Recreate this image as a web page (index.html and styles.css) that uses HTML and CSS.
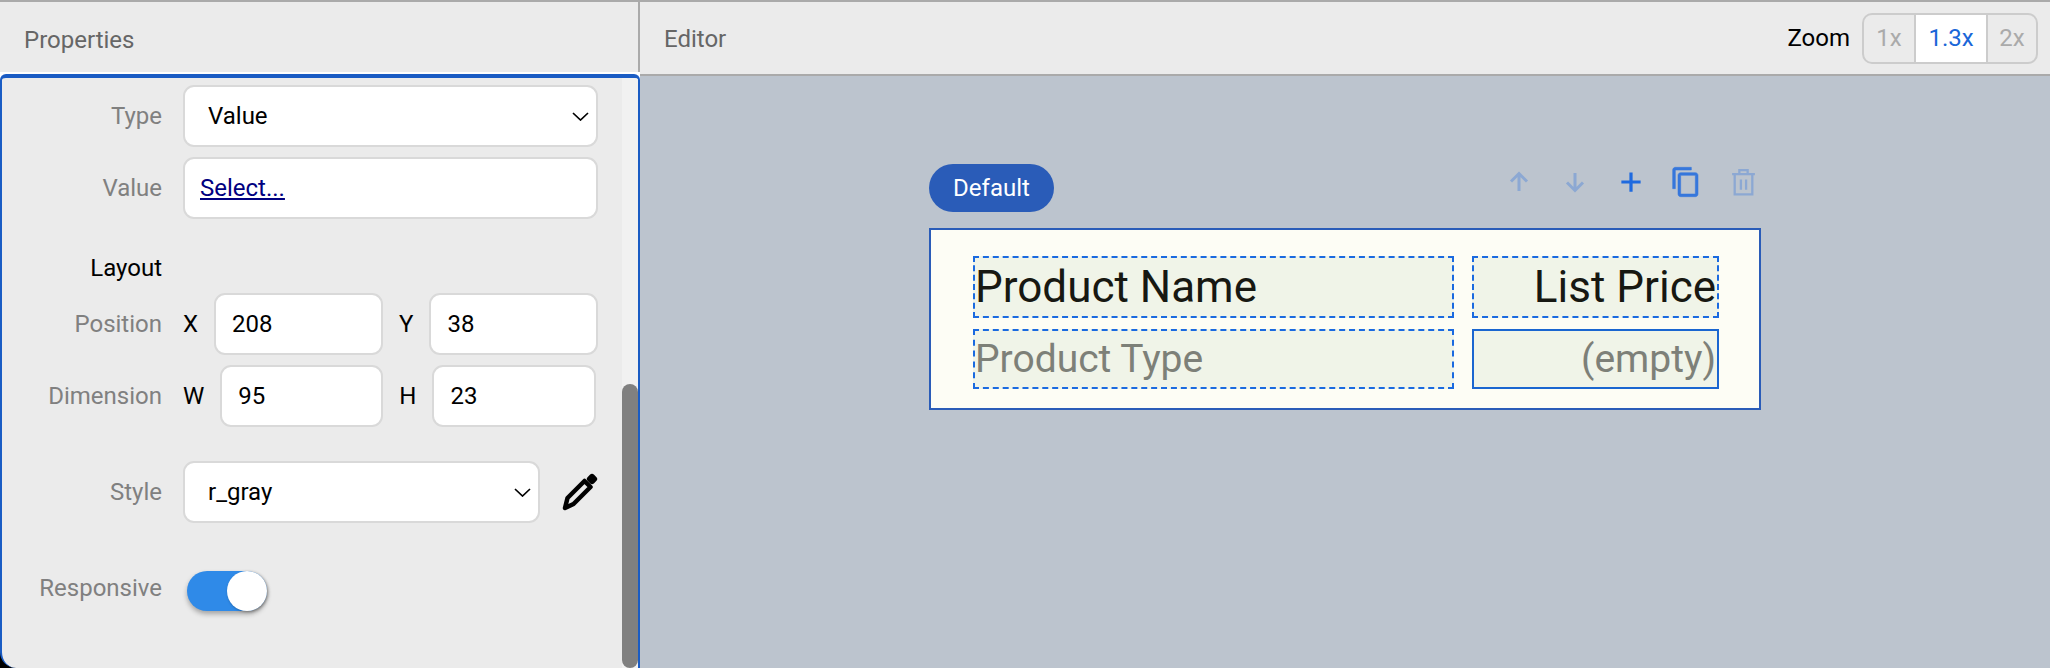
FILE: index.html
```html
<!DOCTYPE html>
<html lang="en">
<head>
<meta charset="utf-8">
<title>Properties and Editor</title>
<link rel="stylesheet" href="styles.css">
</head>
<body>
<div class="app">
  <aside class="left">
    <header class="left-head">Properties</header>
    <div class="panel-wrap">
      <div class="panel">
        <div class="form">
          <div class="row">
            <span class="label">Type</span>
            <div class="field select wide"><span>Value</span>
              <svg class="chev" viewBox="0 0 17 9"><path d="M1 1l7.5 7L16 1"/></svg></div>
          </div>
          <div class="row">
            <span class="label">Value</span>
            <div class="field wide link-field"><a class="link" href="#">Select...</a></div>
          </div>
          <div class="row row-heading"><span class="label heading">Layout</span></div>
          <div class="row row-pair">
            <span class="label">Position</span>
            <span class="letter">X</span><div class="field num w-x">208</div>
            <span class="letter letter-second">Y</span><div class="field num w-y">38</div>
          </div>
          <div class="row row-pair">
            <span class="label">Dimension</span>
            <span class="letter">W</span><div class="field num w-w">95</div>
            <span class="letter letter-second">H</span><div class="field num w-h">23</div>
          </div>
          <div class="row row-style">
            <span class="label">Style</span>
            <div class="field select style-select"><span>r_gray</span>
              <svg class="chev" viewBox="0 0 17 9"><path d="M1 1l7.5 7L16 1"/></svg></div>
            <svg class="pencil" viewBox="0 0 36 38"><path class="pencil-body" d="M3 35l2.500-10 17-17 6 6-17 17z"/><rect class="pencil-cap" x="25.500" y="1.500" width="9" height="9" rx="3" transform="rotate(45 30 6)"/></svg>
          </div>
          <div class="row row-toggle">
            <span class="label">Responsive</span>
            <div class="toggle"><span class="knob"></span></div>
          </div>
        </div>
        <div class="track"><div class="thumb"></div></div>
      </div>
    </div>
  </aside>
  <main class="right">
    <header class="right-head">
      <span class="editor-title">Editor</span>
      <span class="zoom-label">Zoom</span>
      <div class="zoom-group">
        <span class="seg seg-1">1x</span>
        <span class="seg seg-active">1.3x</span>
        <span class="seg seg-3">2x</span>
      </div>
    </header>
    <section class="stage">
      <div class="toolbar">
        <span class="pill">Default</span>
        <div class="tools">
          <svg class="tool faded" viewBox="0 0 24 24"><path d="M12 21V4M4 11.5L12 3.500l8 8"/></svg>
          <svg class="tool faded" viewBox="0 0 24 24"><path d="M12 3v17M4 12.500l8 8 8-8"/></svg>
          <svg class="tool plus" viewBox="0 0 24 24"><path d="M12 1.500v21M1.500 12h21"/></svg>
          <svg class="tool copy" viewBox="0 0 24 24"><path d="M16 1H4c-1.100 0-2 .9-2 2v14h2V3h12V1zm3 4H8c-1.100 0-2 .9-2 2v14c0 1.100.9 2 2 2h11c1.100 0 2-.9 2-2V7c0-1.100-.9-2-2-2zm0 16H8V7h11v14z"/></svg>
          <svg class="tool trash" viewBox="0 0 24 28"><path d="M1 6h22M8 5V2h8v3M3.500 6v19.500h17V6M9.500 11v10M14.500 11v10"/></svg>
        </div>
      </div>
      <div class="canvas">
        <div class="cell dashed title">Product Name</div>
        <div class="cell dashed title end">List Price</div>
        <div class="cell dashed sub">Product Type</div>
        <div class="cell solid sub end">(empty)</div>
      </div>
    </section>
  </main>
</div>
</body>
</html>
```
FILE: styles.css
```css
* { box-sizing: border-box; }
html, body { margin: 0; height: 100%; }
body { font-family: Roboto, "Liberation Sans", sans-serif; font-size: 24px; background: #fff; overflow: hidden; }

.app { display: flex; width: 2050px; height: 668px; }

.left { width: 640px; display: flex; flex-direction: column; background: #fff; }
.left-head {
  height: 72px;
  background: #ebebeb;
  border-top: 2px solid #aaa;
  border-right: 2px solid #aaa;
  padding: 6px 0 0 24px;
  display: flex;
  align-items: center;
  color: #666;
}
.panel-wrap {
  margin-top: 2px;
  flex: 1;
  min-height: 0;
  display: flex;
  background: linear-gradient(#fff 50%, #000 50%);
}
.panel {
  flex: 1;
  display: flex;
  background: #ebebeb;
  border: 2px solid #1a5cc4;
  border-top-width: 4px;
  border-bottom: 0;
  border-radius: 6px 6px 0 16px;
  overflow: hidden;
}
.form { flex: 1; padding-top: 7px; }
.track { width: 16px; background: #f1f1f1; padding-top: 306px; display: flex; }
.thumb { flex: 1; background: #808080; border-radius: 8px; }

.row { display: flex; align-items: center; height: 62px; margin-bottom: 10px; }
.label { width: 160px; text-align: right; color: #808080; flex: none; }
.heading { color: #000; }
.row-heading { height: 28px; margin: 35px 0 11px; }
.row-style { margin: 34px 0 0; }
.row-toggle { height: 40px; margin-top: 48px; align-items: flex-start; }
.row-toggle .label { line-height: 34px; }

.field {
  height: 62px;
  background: #fff;
  border: 2px solid #d9d9d9;
  border-radius: 11px;
  display: flex;
  align-items: center;
  color: #000;
  flex: none;
}
.wide { width: 415px; margin-left: 21px; }
.select { justify-content: space-between; padding: 0 7px 0 23px; }
.link-field { padding-left: 15px; }
.link { color: #000080; text-decoration: underline; }
.chev { width: 17px; height: 9px; fill: none; stroke: #000; stroke-width: 1.700; }
.style-select { width: 357px; margin-left: 21px; }
.pencil { width: 36px; height: 38px; margin-left: 22px; flex: none; }
.pencil-body { fill: none; stroke: #000; stroke-width: 4.500; stroke-linejoin: round; }
.pencil-cap { fill: #000; }

.letter { margin-left: 21px; margin-right: 16px; color: #000; flex: none; }
.letter-second { margin-left: 16px; margin-right: 16px; }
.num { padding-left: 16px; }
.w-x { width: 169px; }
.w-y { width: 169px; }
.w-w { width: 163px; }
.w-h { width: 164px; }

.toggle {
  width: 80px;
  height: 40px;
  margin-left: 25px;
  background: #2f8ae8;
  border-radius: 20px;
  display: flex;
  justify-content: flex-end;
  box-shadow: 0 3px 5px rgba(0, 0, 0, .3);
}
.knob { width: 40px; height: 40px; border-radius: 50%; background: #fff; box-shadow: 1px 1px 3px rgba(0, 0, 0, .35); }

.right { flex: 1; display: flex; flex-direction: column; background: #bcc4ce; }
.right-head {
  height: 76px;
  background: #ebebeb;
  border-top: 2px solid #aaa;
  border-bottom: 2px solid #aaa;
  padding: 0 12px 0 24px;
  display: flex;
  align-items: center;
  color: #000;
}
.editor-title { color: #666; margin-right: auto; padding-top: 2px; }
.zoom-label { margin-right: 12px; }
.zoom-group {
  display: flex;
  width: 176px;
  height: 51px;
  border: 2px solid #ccc;
  border-radius: 10px;
  overflow: hidden;
}
.seg { display: flex; align-items: center; justify-content: center; color: #aaa; }
.seg-1 { width: 50px; }
.seg-3 { flex: 1; }
.seg-active { width: 74px; background: #fff; color: #1a66d8; border-left: 2px solid #ccc; border-right: 2px solid #ccc; }

.stage { flex: 1; padding: 88px 0 0 289px; }
.toolbar { width: 832px; height: 48px; margin-bottom: 16px; display: flex; justify-content: space-between; align-items: center; }
.pill {
  width: 125px;
  height: 48px;
  border-radius: 24px;
  background: #2a5cb8;
  color: #fff;
  display: flex;
  align-items: center;
  justify-content: center;
  font-size: 24px;
}
.tools { display: flex; align-items: center; margin-right: 5px; margin-top: -12px; }
.tool { flex: none; fill: none; stroke: #1f6adf; stroke-width: 2.800; }
.faded { width: 24px; height: 24px; opacity: .3; margin-right: 32px; stroke-width: 3; }
.plus { width: 22px; height: 22px; margin-left: 1px; margin-right: 28px; stroke-width: 3.500; }
.copy { width: 32px; height: 32px; fill: #1f6adf; stroke: #1f6adf; stroke-width: .4; opacity: .85; margin-right: 29px; }
.trash { width: 25px; height: 29px; opacity: .3; stroke-width: 2.200; }

.canvas {
  width: 832px;
  height: 182px;
  background: #fdfdf5;
  border: 2px solid #2a5cb8;
  padding: 26px 0 0 42px;
  display: grid;
  grid-template-columns: 481px 247px;
  grid-template-rows: 62px 60px;
  column-gap: 18px;
  row-gap: 11px;
}
.cell { background: #f0f4e8; display: flex; align-items: center; padding: 0; overflow: hidden; }
.dashed { border: 2px dashed #1a6ae0; }
.solid { border: 2px solid #1a66d0; }
.end { justify-content: flex-end; padding-right: 1px; }
.title { font-size: 44px; color: #171812; }
.sub { font-size: 39px; color: #7d8078; }
```
